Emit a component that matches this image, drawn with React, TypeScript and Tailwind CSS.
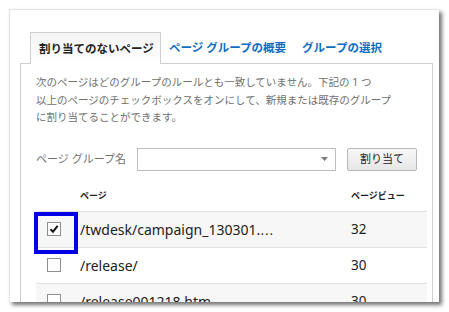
import React from "react";

const font = { fontFamily: '"Noto Sans", "Noto Sans CJK JP", sans-serif' };

const Checkbox = ({ checked }: { checked?: boolean }) => (
  <div className="w-[14px] h-[14px] border border-[#8f8f8f] bg-white flex items-center justify-center">
    {checked && (
      <svg width="10" height="10" viewBox="0 0 10 10">
        <path d="M1.5 5.2 L4 7.8 L8.6 1.8" fill="none" stroke="#111" strokeWidth="2" />
      </svg>
    )}
  </div>
);

const rows = [
  { page: "/twdesk/campaign_130301.", more: true, pv: "32", checked: true },
  { page: "/release/", pv: "30" },
  { page: "/release001218.htm", pv: "30" },
];

const App = () => {
  return (
    <div className="w-[449px] h-[312px] bg-white overflow-hidden pt-[9px] pl-[9px]" style={font}>
      <div className="w-[430px] h-[293px] bg-white overflow-hidden border-t border-l border-[#e4e4e4] shadow-[3px_3px_4px_rgba(0,0,0,0.55)] pt-[22px] pl-[10px]">
        {/* tabs */}
        <div className="flex items-end pl-[10px]">
          <div className="relative z-10 -mb-px h-[32px] w-[131px] border border-b-0 border-[#cfcfcf] bg-gradient-to-b from-[#f4f4f4] to-white flex items-center pl-[8px] text-[11.5px] font-bold text-[#222]">
            割り当てのないページ
          </div>
          <div className="h-[31px] flex items-center pl-[8px] text-[11.5px] font-bold text-[#0d6cc4]">
            ページ グループの概要
          </div>
          <div className="h-[31px] flex items-center pl-[16px] text-[11.5px] font-bold text-[#0d6cc4]">
            グループの選択
          </div>
        </div>

        {/* content box */}
        <div className="w-[413px] h-[260px] border border-[#cfcfcf] pt-[10px] pl-[15px]">
          <p className="text-[10.5px] leading-[17.5px] text-[#707070]">
            次のページはどのグループのルールとも一致していません。下記の 1 つ
            <br />
            以上のページのチェックボックスをオンにして、新規または既存のグループ
            <br />
            に割り当てることができます。
          </p>

          <div className="flex items-center mt-[21px] h-[23px]">
            <div className="w-[101px] text-[11px] text-[#707070]">ページ グループ名</div>
            <div className="w-[199px] h-[23px] border border-[#bdbdbd] bg-white flex items-center justify-end pr-[7px]">
              <svg width="7" height="4" viewBox="0 0 7 4">
                <path d="M0 0 H7 L3.5 4 Z" fill="#7a7a7a" />
              </svg>
            </div>
            <button className="ml-[11px] w-[70px] h-[23px] rounded-[2px] border border-[#b8b8b8] bg-gradient-to-b from-[#f8f8f8] to-[#e6e6e6] text-[11px] text-[#222] flex items-center justify-center">
              割り当て
            </button>
          </div>

          {/* table */}
          <div className="w-[391px] mt-[11px]">
            <div className="flex items-center h-[29px] text-[9px] font-bold text-[#222]">
              <div className="w-[44px]" />
              <div className="w-[271px]">ページ</div>
              <div>ページビュー</div>
            </div>
            {rows.map((r, i) => (
              <div
                key={i}
                className={`relative flex items-center h-[36px] border-t border-[#e2e2e2] text-[14px] text-[#222] ${
                  i % 2 === 0 ? "bg-[#f7f7f7]" : "bg-white"
                }`}
              >
                <div className="w-[44px] pl-[11px]">
                  <Checkbox checked={r.checked} />
                </div>
                <div className="w-[271px]">
                  {r.page}
                  {r.more && <span className="text-[12px]">⋯</span>}
                </div>
                <div className="text-[13.5px]">{r.pv}</div>
                {r.checked && (
                  <div className="absolute left-[-2px] top-0 w-[44px] h-[42px] border-[4px] border-[#0000e6] z-10" />
                )}
              </div>
            ))}
          </div>
        </div>
      </div>
    </div>
  );
};

export default App;
